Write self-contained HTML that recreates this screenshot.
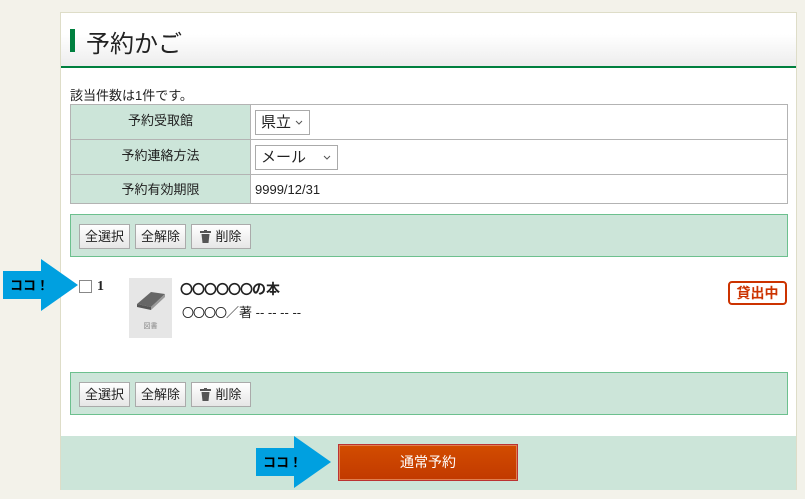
<!DOCTYPE html>
<html><head><meta charset="utf-8"><style>
*{box-sizing:border-box;margin:0;padding:0}
body{width:805px;height:499px;background:#f3f2ea;font-family:"Liberation Sans","Noto Sans CJK JP",sans-serif;position:relative;overflow:hidden;color:#222;font-size:13px}
.abs{position:absolute}
.panel{left:60px;top:12px;width:737px;height:478px;background:#fff;border:1px solid #deddc8;border-bottom:none}
.hdr{left:61px;top:13px;width:735px;height:55px;background:linear-gradient(#fff 40%,#ededed);border-bottom:2px solid #00803f}
.gb{left:70px;top:29px;width:5px;height:23px;background:#00803f}
.title{left:86px;top:24px;font-size:24px;color:#222}
table{position:absolute;left:70px;top:104px;width:718px;border-collapse:collapse}
td{border:1px solid #b3b3b3;font-size:13px;padding:0}
tr.a td{height:35px}
tr.b td{height:29px}
td.l{background:#cce5d9;width:180px;text-align:center;vertical-align:top;padding-top:5px}
td.r{padding-left:4px}
.sel{display:inline-block;border:1px solid #aaa;height:25px;line-height:23px;padding-left:5px;font-size:15px;position:relative;vertical-align:middle}
.sel svg{position:absolute;right:6px;top:9px}
.bar{left:70px;width:718px;height:43px;background:#cce5d9;border:1px solid #6cc08e}
.btn{position:absolute;top:9px;height:25px;border:1px solid #aaa;background:linear-gradient(#fff,#e6e6e6);font-size:13px;line-height:23px;text-align:center}
.btn svg{vertical-align:-2px;margin-right:4px}
.badge{left:728px;top:281px;width:59px;height:24px;border:2px solid #cc3300;border-radius:4px;color:#cc3300;font-weight:bold;font-size:14px;text-align:center;line-height:20px}
.band{left:61px;top:436px;width:735px;height:54px;background:#cce5d9}
.go{left:339px;top:445px;width:178px;height:35px;background:linear-gradient(#d24c00,#c23a00);border:1px solid #e08050;color:#fff;font-size:14px;text-align:center;line-height:33px;box-shadow:0 0 0 1px #b33}
.c{font-family:"Noto Sans CJK JP",sans-serif;font-size:12px;letter-spacing:-1px}
</style></head><body>
<div class="abs panel"></div>
<div class="abs hdr"></div>
<div class="abs gb"></div>
<div class="abs title">予約かご</div>
<div class="abs" style="left:70px;top:85px">該当件数は1件です。</div>
<table>
<tr class="a"><td class="l">予約受取館</td><td class="r"><span class="sel" style="width:55px">県立<svg width="8" height="5"><path d="M1 1L4 4L7 1" stroke="#555" fill="none"/></svg></span></td></tr>
<tr class="a"><td class="l">予約連絡方法</td><td class="r"><span class="sel" style="width:83px">メール<svg width="8" height="5"><path d="M1 1L4 4L7 1" stroke="#555" fill="none"/></svg></span></td></tr>
<tr class="b"><td class="l" style="padding-top:4px">予約有効期限</td><td class="r">9999/12/31</td></tr>
</table>
<div class="abs bar" style="top:214px">
<div class="btn" style="left:8px;width:51px">全選択</div>
<div class="btn" style="left:64px;width:51px">全解除</div>
<div class="btn" style="left:120px;width:60px"><svg width="11" height="13"><rect x="0" y="1" width="11" height="2" fill="#555"/><rect x="4" y="0" width="3" height="2" fill="#555"/><path d="M1.5 4H9.5L8.5 13H2.5Z" fill="#555"/></svg>削除</div>
</div>
<div class="abs" style="left:79px;top:280px;width:13px;height:13px;border:1px solid #888"></div>
<div class="abs" style="left:97px;top:279px;font-weight:bold;font-family:'Liberation Serif',serif;font-size:14px">1</div>
<div class="abs" style="left:129px;top:278px;width:43px;height:60px;background:#e6e6e6">
<svg width="43" height="40" viewBox="0 0 43 40"><path d="M8 26 L22 14 L36 16 L22 29 Z" fill="#666"/><path d="M8 26 L22 29 L22 32 L8 29Z" fill="#555"/><path d="M22 29 L36 16 L36 19 L22 32Z" fill="#999"/></svg>
<div style="font-size:7px;color:#888;text-align:center">図書</div></div>
<div class="abs" style="left:180px;top:279px;font-weight:bold;font-size:14px"><span class="c" style="font-size:13px">〇〇〇〇〇〇</span>の本</div>
<div class="abs" style="left:182px;top:302px;font-size:13px"><span class="c">〇〇〇〇</span>／著 -- -- -- --</div>
<div class="abs badge">貸出中</div>
<div class="abs bar" style="top:372px">
<div class="btn" style="left:8px;width:51px">全選択</div>
<div class="btn" style="left:64px;width:51px">全解除</div>
<div class="btn" style="left:120px;width:60px"><svg width="11" height="13"><rect x="0" y="1" width="11" height="2" fill="#555"/><rect x="4" y="0" width="3" height="2" fill="#555"/><path d="M1.5 4H9.5L8.5 13H2.5Z" fill="#555"/></svg>削除</div>
</div>
<div class="abs band"></div>
<div class="abs go">通常予約</div>
<svg class="abs" style="left:3px;top:259px" width="76" height="53"><path d="M0 12 H38 V0 L75 26 L38 52 V40 H0Z" fill="#00a0e0"/><text x="7" y="31" font-size="13" font-weight="bold" font-family="Liberation Sans,Noto Sans CJK JP,sans-serif" fill="#000">ココ！</text></svg>
<svg class="abs" style="left:256px;top:436px" width="76" height="53"><path d="M0 12 H38 V0 L75 26 L38 52 V40 H0Z" fill="#00a0e0"/><text x="7" y="31" font-size="13" font-weight="bold" font-family="Liberation Sans,Noto Sans CJK JP,sans-serif" fill="#000">ココ！</text></svg>
</body></html>
